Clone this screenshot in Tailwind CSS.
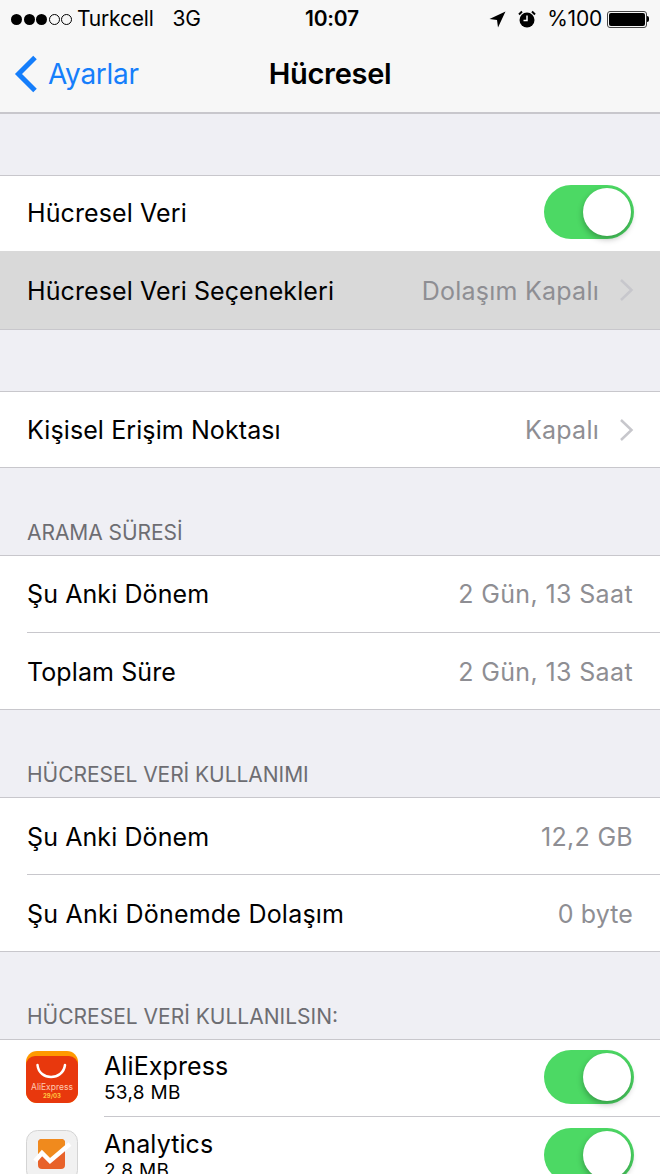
<!DOCTYPE html>
<html lang="tr">
<head>
  <meta charset="UTF-8">
  <title>Hücresel</title>
  <script src="https://cdn.jsdelivr.net/npm/@tailwindcss/browser@4"></script>
</head>
<body class="w-[660px] h-[1174px] overflow-hidden bg-[#efeff4] font-['Inter','Liberation_Sans',sans-serif] text-black">
  <!-- nav -->
  <header class="h-[114px] bg-[#f7f7f7] border-b-2 border-[#c8c7cc] flex flex-col">
    <div class="h-[38px] flex items-center justify-between px-[11px] text-[21px] tracking-[-0.2px] relative">
      <div class="flex items-center">
        <div class="flex gap-[1.5px] mr-[5px]">
          <span class="size-[11px] rounded-full bg-black"></span>
          <span class="size-[11px] rounded-full bg-black"></span>
          <span class="size-[11px] rounded-full bg-black"></span>
          <span class="size-[11px] rounded-full border border-black"></span>
          <span class="size-[11px] rounded-full border border-black"></span>
        </div>
        <span>Turkcell</span>
        <span class="ml-[19px]">3G</span>
      </div>
      <span class="absolute left-[305px] font-semibold">10:07</span>
      <div class="flex items-center">
        <svg width="17" height="17" viewBox="0 0 17 17" class="mr-[12px]"><path d="M16.5 0.5 L0.5 8 L8 9 L9 16.5 Z" fill="#000"/></svg>
        <svg width="18" height="18" viewBox="0 0 18 18" class="mr-[11px]"><circle cx="9" cy="10" r="7.5" fill="#000"/><path d="M9 5.5V10.5H5.5" fill="none" stroke="#fff" stroke-width="1.5"/><path d="M1 4.5 L4 1.5 M17 4.5 L14 1.5" stroke="#000" stroke-width="2"/></svg>
        <span>%100</span>
        <div class="ml-[5px] w-[40px] h-[17px] rounded-[3px] border border-[#444] p-[1px]">
          <div class="w-full h-full bg-black rounded-[2px]"></div>
        </div>
        <div class="w-[2px] h-[6px] bg-black rounded-r-sm"></div>
      </div>
    </div>
    <div class="flex-1 flex items-center relative pb-[2px]">
      <svg width="24" height="38" viewBox="0 0 24 38" class="ml-[14px]"><path d="M21 2.5 L4.5 19 L21 35.5" fill="none" stroke="#157efb" stroke-width="5"/></svg>
      <span class="ml-[10px] text-[28px] tracking-[-0.3px] text-[#157efb]">Ayarlar</span>
      <span class="absolute inset-x-0 text-center text-[29px] font-semibold tracking-[-0.3px]">Hücresel</span>
    </div>
  </header>

  <div class="h-[61px]"></div>
  <section class="bg-white border-y border-[#c8c7cc]">
    <div class="h-[75px] pl-[27px] pr-[26px] flex items-center justify-between text-[25px] tracking-[0.1px]">
      <span>Hücresel Veri</span>
      <div class="w-[90px] h-[54px] rounded-full bg-[#4cd964] p-[3px] flex justify-end mb-[3px]">
        <div class="size-[48px] rounded-full bg-white shadow-[0_3px_6px_rgba(0,0,0,0.3)]"></div>
      </div>
    </div>
    <div class="h-[78px] pl-[27px] pr-[26px] pt-[3px] bg-[#d9d9d9] flex items-center justify-between text-[25px] tracking-[0.1px]">
      <span>Hücresel Veri Seçenekleri</span>
      <div class="flex items-center text-[#8e8e93] tracking-[0.25px]">
        <span>Dolaşım Kapalı</span>
        <svg width="15" height="24" viewBox="0 0 15 24" class="ml-[20px] mb-[3px]"><path d="M2 2 L12.5 12 L2 22" fill="none" stroke="#c7c7cc" stroke-width="2.5"/></svg>
      </div>
    </div>
  </section>

  <div class="h-[61px]"></div>
  <section class="bg-white border-y border-[#c8c7cc]">
    <div class="h-[75px] pl-[27px] pr-[26px] pt-[3px] flex items-center justify-between text-[25px] tracking-[0.1px]">
      <span>Kişisel Erişim Noktası</span>
      <div class="flex items-center text-[#8e8e93] tracking-[0.25px]">
        <span>Kapalı</span>
        <svg width="15" height="24" viewBox="0 0 15 24" class="ml-[20px] mb-[3px]"><path d="M2 2 L12.5 12 L2 22" fill="none" stroke="#c7c7cc" stroke-width="2.5"/></svg>
      </div>
    </div>
  </section>

  <h3 class="h-[87px] pl-[27px] pb-[7px] flex items-end text-[#6d6d72] text-[21px] tracking-[-0.05px]">ARAMA SÜRESİ</h3>
  <section class="bg-white border-y border-[#c8c7cc]">
    <div class="h-[77px] pr-[27px] ml-[27px] pt-[1px] flex items-center justify-between text-[25px] tracking-[0.1px] border-b border-[#c8c7cc]">
      <span>Şu Anki Dönem</span>
      <span class="text-[#8e8e93] tracking-[0.37px]">2 Gün, 13 Saat</span>
    </div>
    <div class="h-[76px] pr-[27px] ml-[27px] pt-[4px] flex items-center justify-between text-[25px] tracking-[0.1px]">
      <span>Toplam Süre</span>
      <span class="text-[#8e8e93] tracking-[0.37px]">2 Gün, 13 Saat</span>
    </div>
  </section>

  <h3 class="h-[87px] pl-[27px] pb-[7px] flex items-end text-[#6d6d72] text-[21px] tracking-[-0.05px]">HÜCRESEL VERİ KULLANIMI</h3>
  <section class="bg-white border-y border-[#c8c7cc]">
    <div class="h-[77px] pr-[27px] ml-[27px] pt-[3px] flex items-center justify-between text-[25px] tracking-[0.1px] border-b border-[#c8c7cc]">
      <span>Şu Anki Dönem</span>
      <span class="text-[#8e8e93] tracking-[0.3px]">12,2 GB</span>
    </div>
    <div class="h-[76px] pr-[27px] ml-[27px] pt-[3px] flex items-center justify-between text-[25px] tracking-[0.1px]">
      <span class="tracking-[0.22px]">Şu Anki Dönemde Dolaşım</span>
      <span class="text-[#8e8e93] tracking-[0.1px]">0 byte</span>
    </div>
  </section>

  <h3 class="h-[87px] pl-[27px] pb-[7px] flex items-end text-[#6d6d72] text-[21px] tracking-[0px]">HÜCRESEL VERİ KULLANILSIN:</h3>
  <section class="bg-white border-t border-[#c8c7cc]">
    <div class="flex items-center pl-[26px]">
      <svg width="52" height="52" viewBox="0 0 52 52" class="shrink-0 mb-[3px]">
        <rect width="52" height="52" rx="11" fill="#ff9a00"/>
        <path d="M0 14 A9 9 0 0 1 9 5 H43 A9 9 0 0 1 52 14 V41 A11 11 0 0 1 41 52 H11 A11 11 0 0 1 0 41 Z" fill="#e8380d"/>
        <path d="M11.500 14 C13 30 37 30 39 14" fill="none" stroke="#fff" stroke-width="2.500" stroke-linecap="round"/>
        <text x="26" y="39" text-anchor="middle" font-size="8.500" fill="#ffc9b0" font-family="Inter">AliExpress</text>
        <text x="26" y="47" text-anchor="middle" font-size="6" font-weight="700" fill="#ffc640" font-family="Inter">29/03</text>
      </svg>
      <div class="flex-1 ml-[26px] h-[77px] pr-[26px] flex items-center justify-between border-b border-[#c8c7cc]">
        <div class="flex flex-col pt-[1px]">
          <span class="text-[25px] leading-[28px] tracking-[0.1px]">AliExpress</span>
          <span class="text-[19px] leading-[25px] tracking-[0.3px]">53,8 MB</span>
        </div>
        <div class="w-[90px] h-[54px] rounded-full bg-[#4cd964] p-[3px] flex justify-end mb-[3px]">
          <div class="size-[48px] rounded-full bg-white shadow-[0_3px_6px_rgba(0,0,0,0.3)]"></div>
        </div>
      </div>
    </div>
    <div class="flex items-center pl-[26px]">
      <svg width="52" height="52" viewBox="0 0 52 52" class="shrink-0">
        <rect x="0.5" y="0.5" width="51" height="51" rx="11" fill="#f1f1f1" stroke="#d4d4d4"/>
        <rect x="12" y="9" width="27" height="30" rx="4" fill="#e8622a"/>
        <path d="M12 13 A4 4 0 0 1 16 9 H35 A4 4 0 0 1 39 13 V19 L24 31 L16 22 L12 26 Z" fill="#f08a1d"/>
        <path d="M9 31 L16 23 L24 31 L44 14" fill="none" stroke="#fff" stroke-width="4.500"/>
      </svg>
      <div class="flex-1 ml-[26px] h-[77px] pr-[26px] flex items-center justify-between">
        <div class="flex flex-col pt-[2px]">
          <span class="text-[25px] leading-[28px] tracking-[0.1px]">Analytics</span>
          <span class="text-[19px] leading-[25px] tracking-[0.3px]">2,8 MB</span>
        </div>
        <div class="w-[90px] h-[54px] rounded-full bg-[#4cd964] p-[3px] flex justify-end mb-[2px]">
          <div class="size-[48px] rounded-full bg-white shadow-[0_3px_6px_rgba(0,0,0,0.3)]"></div>
        </div>
      </div>
    </div>
  </section>
</body>
</html>
